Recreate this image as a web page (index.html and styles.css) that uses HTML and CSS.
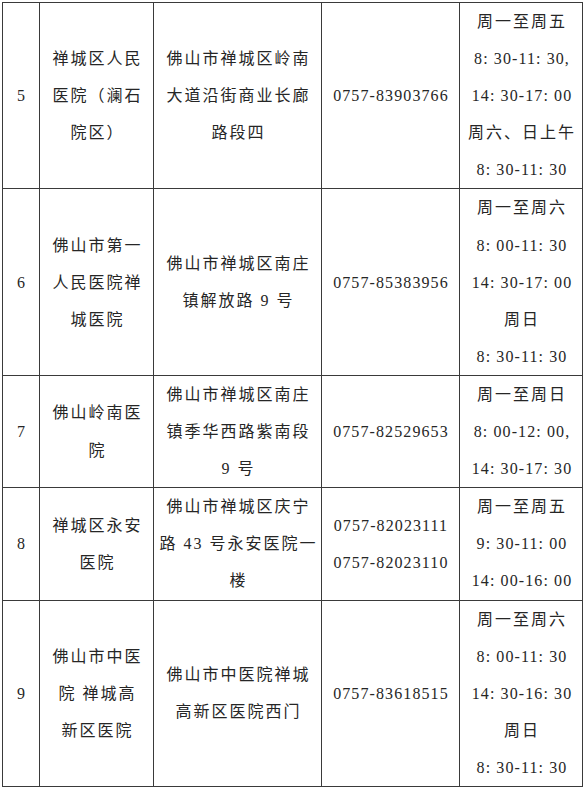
FILE: index.html
```html
<!DOCTYPE html>
<html lang="zh-CN">
<head>
<meta charset="utf-8">
<title>医院列表</title>
<link rel="stylesheet" href="styles.css">
</head>
<body>
<table class="list">
  <colgroup>
    <col class="c-no">
    <col class="c-name">
    <col class="c-addr">
    <col class="c-tel">
    <col class="c-time">
  </colgroup>
  <tbody>
    <tr>
      <td class="no">5</td>
      <td class="cjk">禅城区人民<br>医院（澜石<br>院区）</td>
      <td class="cjk">佛山市禅城区岭南<br>大道沿街商业长廊<br>路段四</td>
      <td class="num">0757-83903766</td>
      <td class="cjk">周一至周五<br><span class="num">8: 30-11: 30,</span><br><span class="num">14: 30-17: 00</span><br>周六、日上午<br><span class="num">8: 30-11: 30</span></td>
    </tr>
    <tr>
      <td class="no">6</td>
      <td class="cjk">佛山市第一<br>人民医院禅<br>城医院</td>
      <td class="cjk">佛山市禅城区南庄<br>镇解放路 9 号</td>
      <td class="num">0757-85383956</td>
      <td class="cjk">周一至周六<br><span class="num">8: 00-11: 30</span><br><span class="num">14: 30-17: 00</span><br>周日<br><span class="num">8: 30-11: 30</span></td>
    </tr>
    <tr>
      <td class="no">7</td>
      <td class="cjk">佛山岭南医<br>院</td>
      <td class="cjk">佛山市禅城区南庄<br>镇季华西路紫南段<br>9 号</td>
      <td class="num">0757-82529653</td>
      <td class="cjk">周一至周日<br><span class="num">8: 00-12: 00,</span><br><span class="num">14: 30-17: 30</span></td>
    </tr>
    <tr>
      <td class="no">8</td>
      <td class="cjk">禅城区永安<br>医院</td>
      <td class="cjk">佛山市禅城区庆宁<br>路 43 号永安医院一<br>楼</td>
      <td class="num">0757-82023111<br>0757-82023110</td>
      <td class="cjk">周一至周五<br><span class="num">9: 30-11: 00</span><br><span class="num">14: 00-16: 00</span></td>
    </tr>
    <tr>
      <td class="no">9</td>
      <td class="cjk">佛山市中医<br>院 禅城高<br>新区医院</td>
      <td class="cjk">佛山市中医院禅城<br>高新区医院西门</td>
      <td class="num">0757-83618515</td>
      <td class="cjk">周一至周六<br><span class="num">8: 00-11: 30</span><br><span class="num">14: 30-16: 30</span><br>周日<br><span class="num">8: 30-11: 30</span></td>
    </tr>
  </tbody>
</table>
</body>
</html>
```

FILE: styles.css
```css
html, body {
  margin: 0;
  padding: 0;
  background: #ffffff;
}

body {
  font-family: "Liberation Serif", "Noto Sans CJK SC", serif;
  color: #262626;
}

.list {
  margin: 2px 0 0 2px;
  width: 580px;
  table-layout: fixed;
  border-collapse: collapse;
  border: 1px solid #2a2a2a;
}

.c-no { width: 37px; }
.c-name { width: 114px; }
.c-addr { width: 168px; }
.c-tel { width: 138px; }
.c-time { width: 123px; }

.list td {
  border: 1px solid #3a3a3a;
  padding: 0;
  text-align: center;
  vertical-align: middle;
  font-size: 16px;
  line-height: 37.1px;
  white-space: nowrap;
}

.list td.cjk {
  letter-spacing: 2px;
  padding-left: 2px;
}

.list td.num,
.list td.no {
  letter-spacing: 1.1px;
  padding-left: 1px;
}

.list .cjk .num {
  letter-spacing: 1.1px;
}
```
